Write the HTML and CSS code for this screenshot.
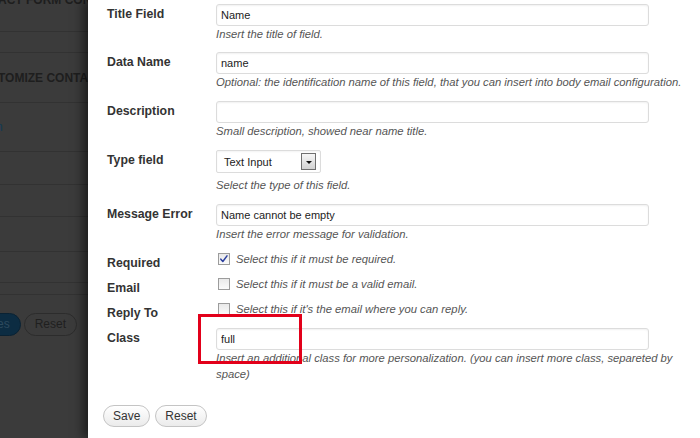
FILE: index.html
```html
<!DOCTYPE html>
<html lang="en">
<head>
<meta charset="utf-8">
<title>Field settings</title>
<link rel="stylesheet" href="styles.css">
</head>
<body>
<div class="screen">
  <aside class="backdrop">
    <div class="bd-row r1"><span class="bd-title bd-top">ACT FORM CONFIGURATION</span></div>
    <div class="bd-row r2"></div>
    <div class="bd-row r3"><span class="bd-title">TOMIZE CONTACT FORM</span></div>
    <div class="bd-row r4"><span class="bd-link">n</span></div>
    <div class="bd-row r5"></div>
    <div class="bd-row r6"></div>
    <div class="bd-row r7"></div>
    <div class="bd-row r8"></div>
    <div class="bd-row r9"></div>
    <div class="bd-actions">
      <span class="bd-btn bd-primary">es</span>
      <span class="bd-btn">Reset</span>
    </div>
  </aside>

  <main class="panel">
    <div class="row first">
      <label class="lbl">Title Field</label>
      <div class="field">
        <input class="input" type="text" value="Name">
        <p class="desc">Insert the title of field.</p>
      </div>
    </div>
    <div class="row">
      <label class="lbl">Data Name</label>
      <div class="field">
        <input class="input" type="text" value="name">
        <p class="desc">Optional: the identification name of this field, that you can insert into body email configuration.</p>
      </div>
    </div>
    <div class="row">
      <label class="lbl">Description</label>
      <div class="field">
        <input class="input" type="text" value="">
        <p class="desc">Small description, showed near name title.</p>
      </div>
    </div>
    <div class="row">
      <label class="lbl">Type field</label>
      <div class="field">
        <div class="select"><span class="select-text">Text Input</span><span class="select-btn"><span class="tri"></span></span></div>
        <p class="desc desc-select">Select the type of this field.</p>
      </div>
    </div>
    <div class="row before-checks">
      <label class="lbl">Message Error</label>
      <div class="field">
        <input class="input" type="text" value="Name cannot be empty">
        <p class="desc">Insert the error message for validation.</p>
      </div>
    </div>
    <div class="row check">
      <label class="lbl">Required</label>
      <div class="field check-field">
        <span class="cb checked"><svg viewBox="0 0 12 12" width="10" height="10"><path d="M2.2 6.2 L4.6 9 L9.6 2.2" fill="none" stroke="#2b3f9e" stroke-width="1.8" stroke-linecap="round" stroke-linejoin="round"/></svg></span>
        <span class="check-text">Select this if it must be required.</span>
      </div>
    </div>
    <div class="row check">
      <label class="lbl">Email</label>
      <div class="field check-field">
        <span class="cb"></span>
        <span class="check-text">Select this if it must be a valid email.</span>
      </div>
    </div>
    <div class="row check">
      <label class="lbl">Reply To</label>
      <div class="field check-field">
        <span class="cb"></span>
        <span class="check-text">Select this if it's the email where you can reply.</span>
      </div>
    </div>
    <div class="row class-row">
      <label class="lbl">Class</label>
      <div class="field">
        <input class="input" type="text" value="full">
        <p class="desc desc-wrap">Insert an additional class for more personalization. (you can insert more class, separeted by space)</p>
      </div>
    </div>
    <div class="actions">
      <button class="btn" type="button">Save</button>
      <button class="btn" type="button">Reset</button>
    </div>
    <div class="highlight"></div>
  </main>
</div>
</body>
</html>
```
FILE: styles.css
```css
html, body {
  margin: 0;
  padding: 0;
  height: 100%;
}
body {
  font-family: "Liberation Sans", Arial, sans-serif;
  background: #fff;
  overflow: hidden;
}
.screen {
  display: flex;
  height: 438px;
}

/* dimmed page behind the panel */
.backdrop {
  width: 88px;
  flex: none;
  background: #3b3b3b;
  overflow: hidden;
  display: flex;
  flex-direction: column;
}
.bd-row {
  border-bottom: 1px solid #323232;
  overflow: hidden;
  white-space: nowrap;
}
.r1 { height: 31px; }
.r2 { height: 20px; }
.r3 { height: 49px; display: flex; align-items: center; }
.r4 { height: 48px; display: flex; align-items: center; }
.r5 { height: 32px; }
.r6 { height: 31px; }
.r7 { height: 34px; }
.r8 { height: 30px; }
.r9 { height: 11px; }
.bd-title {
  display: block;
  font-size: 12px;
  font-weight: bold;
  color: #1e1e1e;
  text-indent: -2px;
  line-height: 14px;
}
.bd-top {
  margin-top: -7px;
}
.bd-link {
  font-size: 12px;
  color: #123a55;
  margin-left: -4px;
}
.bd-actions {
  display: flex;
  gap: 3px;
  margin-top: 18px;
  margin-left: -14px;
}
.bd-btn {
  box-sizing: border-box;
  height: 23px;
  line-height: 21px;
  padding: 0 10px;
  border: 1px solid #2c2c2c;
  border-radius: 12px;
  font-size: 12px;
  color: #1f1f1f;
  background: #3b3b3b;
}
.bd-primary {
  background: #0c2c42;
  border-color: #0a2233;
  color: #2c4a5e;
}

/* the settings panel */
.panel {
  flex: 1;
  position: relative;
  z-index: 1;
  background: #fff;
  box-shadow: -5px 0 10px rgba(0, 0, 0, 0.5);
  padding: 4px 0 0 19px;
}
.row {
  display: flex;
  margin-bottom: 12px;
}
.row.first { margin-bottom: 11px; }
.lbl {
  width: 109px;
  flex: none;
  padding-top: 1px;
  font-size: 12.3px;
  font-weight: bold;
  line-height: 18px;
  color: #333;
}
.field {
  width: 475px;
}
.input {
  display: block;
  box-sizing: border-box;
  width: 433px;
  height: 22px;
  margin: 0;
  padding: 0 4px;
  border: 1px solid #dcdcdc;
  border-radius: 3px;
  box-shadow: inset 0 1px 2px rgba(0, 0, 0, 0.06);
  font-family: "Liberation Sans", Arial, sans-serif;
  font-size: 11px;
  color: #222;
  background: #fff;
  outline: none;
}
.desc {
  margin: 1px 0 0;
  font-size: 11.25px;
  font-style: italic;
  line-height: 14px;
  color: #555;
}
.desc-select { margin-top: 5px; }

.select {
  box-sizing: border-box;
  width: 105px;
  height: 23px;
  border: 1px solid #dcdcdc;
  border-radius: 2px;
  display: flex;
  align-items: center;
  justify-content: space-between;
  padding: 0 4px 0 7px;
  box-shadow: inset 0 1px 2px rgba(0, 0, 0, 0.05);
}
.select-text {
  font-size: 11px;
  color: #222;
}
.select-btn {
  box-sizing: border-box;
  width: 15px;
  height: 17px;
  border: 1px solid #6f6f6f;
  background: linear-gradient(#f6f6f6, #d2d2d2);
  display: flex;
  align-items: center;
  justify-content: center;
}
.tri {
  width: 0;
  height: 0;
  border-left: 3px solid transparent;
  border-right: 3px solid transparent;
  border-top: 3px solid #111;
  margin-top: 1px;
}

.row.before-checks { margin-bottom: 7px; }
.row.check {
  height: 25px;
  margin-bottom: 0;
}
.row.check .lbl { padding-top: 6px; }
.check-field {
  display: flex;
  align-items: center;
  gap: 6px;
  padding-top: 4px;
  height: 14px;
}
.cb {
  box-sizing: border-box;
  width: 12px;
  height: 12px;
  margin-left: 2px;
  border: 1px solid #9c9c9c;
  background: linear-gradient(#e9e9e9, #fafafa);
  display: flex;
  align-items: center;
  justify-content: center;
}
.check-text {
  font-size: 11.25px;
  font-style: italic;
  line-height: 14px;
  color: #555;
}
.row.class-row {
  margin-top: 5px;
  margin-bottom: 23px;
}
.desc-wrap {
  margin-top: 0;
  line-height: 16px;
}

.actions {
  display: flex;
  gap: 5px;
  margin-left: -4px;
}
.btn {
  box-sizing: border-box;
  height: 22px;
  padding: 0 9px;
  border: 1px solid #c4c4c4;
  border-radius: 11px;
  background: linear-gradient(#ffffff, #ebebeb);
  font-family: "Liberation Sans", Arial, sans-serif;
  font-size: 12px;
  color: #333;
}

/* annotation box */
.highlight {
  position: absolute;
  left: 110px;
  top: 314px;
  width: 104px;
  height: 50px;
  box-sizing: border-box;
  border: 3px solid #e2001a;
}
```
